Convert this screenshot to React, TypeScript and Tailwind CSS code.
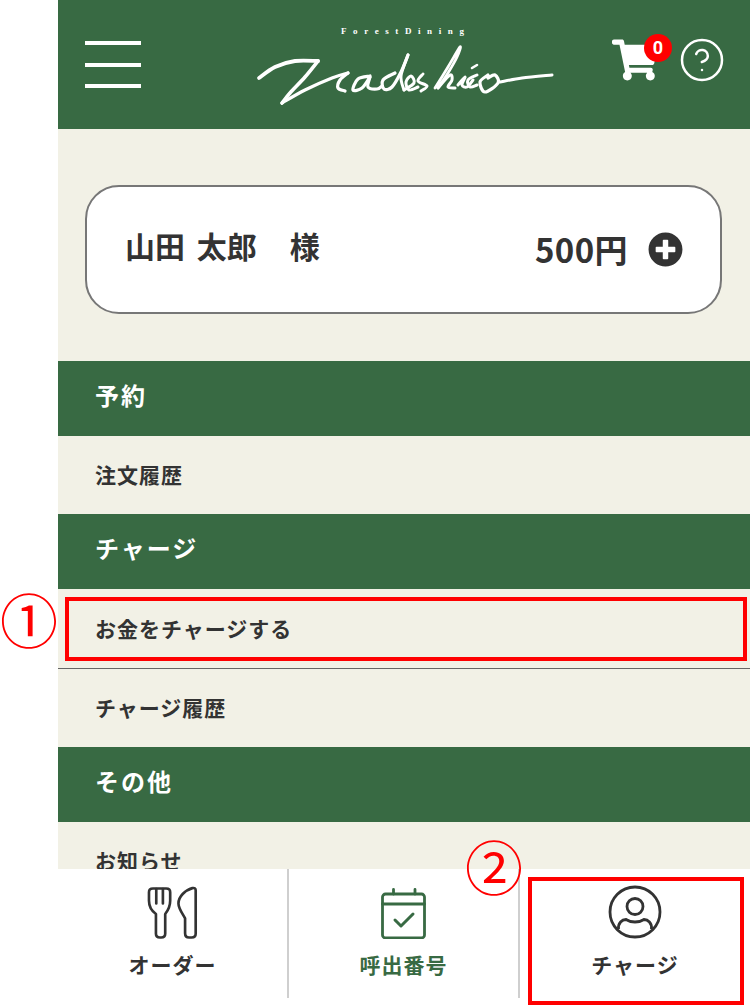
import type { ReactNode } from "react";
import { FaShoppingCart, FaPlusCircle } from "react-icons/fa";
import { CircleHelp } from "lucide-react";

const jp = "font-['Noto_Sans_CJK_JP',sans-serif]";

function smooth(p: number[][]) {
  let d = `M${p[0][0]} ${p[0][1]}`;
  for (let i = 0; i < p.length - 1; i++) {
    const a = p[Math.max(i - 1, 0)];
    const b = p[i];
    const c = p[i + 1];
    const e = p[Math.min(i + 2, p.length - 1)];
    d += `C${b[0] + (c[0] - a[0]) / 6} ${b[1] + (c[1] - a[1]) / 6} ${c[0] - (e[0] - b[0]) / 6} ${c[1] - (e[1] - b[1]) / 6} ${c[0]} ${c[1]}`;
  }
  return d;
}

const logoStrokes: { w: number; p: number[][] }[] = [
  { w: 3.8, p: [[259, 78], [275, 67], [295, 61], [318, 61]] },
  { w: 3.6, p: [[318, 61], [305, 77], [290, 93], [282, 103]] },
  { w: 3.2, p: [[282, 103], [305, 90], [332, 78], [348, 73]] },
  { w: 3.2, p: [[348, 73], [340, 80], [338, 88], [345, 91]] },
  { w: 3.2, p: [[370, 76], [358, 79], [353, 90], [362, 88], [370, 77]] },
  { w: 3.2, p: [[370, 77], [368, 87], [377, 89], [382, 86]] },
  { w: 3.2, p: [[395, 73], [383, 80], [384, 89], [392, 87], [401, 72], [408, 55]] },
  { w: 3, p: [[408, 55], [401, 76], [404, 90]] },
  { w: 3, p: [[404, 90], [414, 83], [411, 76], [406, 82], [409, 90], [418, 87]] },
  { w: 3, p: [[423, 74], [418, 81], [427, 86], [421, 91]] },
  { w: 2.8, p: [[435, 88], [448, 67], [460, 47], [457, 57], [448, 73], [438, 88]] },
  { w: 3, p: [[438, 88], [450, 75], [452, 80], [448, 87], [455, 88]] },
  { w: 3, p: [[458, 85], [465, 77], [462, 85], [467, 87], [473, 80]] },
  { w: 2.6, p: [[472, 68], [477, 65]] },
  { w: 3, p: [[477, 75], [468, 80], [470, 87], [477, 85]] },
  { w: 3.2, p: [[488, 75], [480, 82], [485, 92], [498, 83], [495, 75], [488, 78]] },
  { w: 3, p: [[500, 82], [522, 78], [552, 75]] },
];

function Logo() {
  return (
    <svg viewBox="255 40 300 70" className="absolute left-[197px] top-[40px] w-[300px] h-[70px]" fill="none" stroke="#fff" strokeLinecap="round" strokeLinejoin="round">
      {logoStrokes.map((s, i) => (
        <path key={i} d={smooth(s.p)} strokeWidth={s.w} />
      ))}
    </svg>
  );
}

function Bar({ children }: { children: string }) {
  return (
    <div className="h-[75px] shrink-0 bg-[#386a43] pl-[37px] pb-[8px] flex items-center text-white text-[24px] font-bold tracking-[2px]">
      {children}
    </div>
  );
}

function Item({ children, h = "h-[78px]" }: { children: string; h?: string }) {
  return (
    <div className={`${h} shrink-0 pl-[37px] flex items-center text-[#333] text-[21px] font-bold tracking-[1px]`}>
      {children}
    </div>
  );
}

function Fork() {
  return (
    <svg viewBox="262 135 160 162" className="w-[53px] h-[54px]" fill="none" stroke="#333" strokeWidth="8" strokeLinejoin="round" strokeLinecap="round">
      <path d="M292 222C278 212 271 200 271 182V156Q271 145 283 145H323Q335 145 335 156V182C335 200 328 212 320 222V282Q320 293 308 293H304Q292 293 292 282Z" />
      <path d="M293 147V190M313 147V190" />
      <path d="M412 150Q412 142 402 144C380 150 360 170 360 190C360 205 372 220 380 235V280Q380 293 392 293H400Q412 293 412 282Z" />
    </svg>
  );
}

function Calendar() {
  return (
    <svg viewBox="0 0 50 52.5" className="w-[50px] h-[52.5px]" fill="none" stroke="#386a43" strokeWidth="2.8" strokeLinecap="round" strokeLinejoin="round">
      <rect x="3.5" y="7" width="42" height="44" rx="3" />
      <path d="M3.5 17H45.5M14.5 2.5V7M36 2.5V7" />
      <path d="M16 33L22 39L34 27" strokeWidth="3" />
    </svg>
  );
}

function User() {
  return (
    <svg viewBox="0 0 54 54" className="w-[54px] h-[54px]" fill="none" stroke="#333" strokeWidth="2.8">
      <circle cx="27" cy="27" r="25" />
      <circle cx="27" cy="21.5" r="8" />
      <path d="M10.5 44C10 38 14 34.5 18 34.5C21 36.5 24 37 27 37C30 37 33 36.5 36 34.5C40 34.5 44 38 43.5 44" />
    </svg>
  );
}

function Tab({ label, green, icon, width }: { label: string; green?: boolean; icon: ReactNode; width: string }) {
  return (
    <div className={`${width} h-[129px] flex flex-col items-center`}>
      <div className="h-[70px] flex items-end justify-center">{icon}</div>
      <div className={`mt-[7px] text-[21px] font-bold leading-[36px] tracking-[1px] ${green ? "text-[#386a43]" : "text-[#333]"}`}>{label}</div>
    </div>
  );
}

function Divider() {
  return <div className="w-[2px] h-[129px] shrink-0 bg-[#cfcfcf]" />;
}

export default function App() {
  return (
    <div className={`relative w-[750px] h-[1005px] overflow-hidden bg-white pl-[58px] ${jp}`}>
      <div className="w-[692px] h-[1005px] flex flex-col">
        <header className="relative h-[129px] shrink-0 bg-[#386a43]">
          <div className="absolute left-[27px] top-[41px] w-[56px] flex flex-col gap-[18px]">
            <div className="h-[4px] bg-white" />
            <div className="h-[4px] bg-white" />
            <div className="h-[4px] bg-white mt-[-1px]" />
          </div>
          <div className="absolute left-[283px] top-[25px] text-[9px] leading-[12px] font-bold text-white tracking-[6.6px] font-['Liberation_Serif',serif]">ForestDining</div>
          <Logo />
          <FaShoppingCart className="absolute left-[554px] top-[39px] w-[46px] h-[42px] text-white" />
          <div className="absolute left-[586px] top-[34px] w-[28px] h-[28px] rounded-full bg-[#f00] flex items-center justify-center text-white text-[18px] font-bold leading-none font-['Roboto',sans-serif]">0</div>
          <CircleHelp className="absolute left-[620px] top-[36px] w-[48px] h-[48px] text-white" strokeWidth={1.25} />
        </header>
        <div className="flex-1 min-h-0 overflow-hidden bg-[#f2f1e6] flex flex-col">
          <div className="h-[232px] shrink-0 pl-[27px] pr-[28px] pt-[56px]">
            <div className="h-[129px] rounded-[34px] border-2 border-[#777] bg-white pl-[38px] pr-[37px] flex items-center justify-between text-[#333]">
              <div className="flex text-[30px] font-bold leading-none -mt-[10px] whitespace-pre">
                <span className="[word-spacing:5px]">山田 太郎</span>
                <span className="ml-[33px]">様</span>
              </div>
              <div className="flex items-center gap-[20px]">
                <span className="text-[33px] font-bold leading-none tracking-[0.4px]">500円</span>
                <FaPlusCircle className="w-[35px] h-[35px] text-[#333]" />
              </div>
            </div>
          </div>
          <Bar>予約</Bar>
          <Item>注文履歴</Item>
          <Bar>チャージ</Bar>
          <Item h="h-[79px]">お金をチャージする</Item>
          <div className="h-[1px] shrink-0 bg-[#666]" />
          <Item>チャージ履歴</Item>
          <Bar>その他</Bar>
          <Item>お知らせ</Item>
        </div>
        <nav className="h-[136px] shrink-0 bg-white flex items-start">
          <Tab width="w-[229px]" label="オーダー" icon={<Fork />} />
          <Divider />
          <Tab width="w-[229px]" label="呼出番号" green icon={<Calendar />} />
          <Divider />
          <Tab width="w-[230px]" label="チャージ" icon={<User />} />
        </nav>
      </div>
      <div className="absolute left-[65px] top-[597px] w-[682px] h-[64px] border-[4px] border-[#f00]" />
      <div className="absolute left-[528px] top-[877px] w-[216px] h-[128px] border-[4px] border-[#f00]" />
      <div className="absolute left-0 top-[578px] text-[58px] leading-[80px] text-[#f00]">①</div>
      <div className="absolute left-[465px] top-[825px] text-[58px] leading-[80px] text-[#f00]">②</div>
    </div>
  );
}
